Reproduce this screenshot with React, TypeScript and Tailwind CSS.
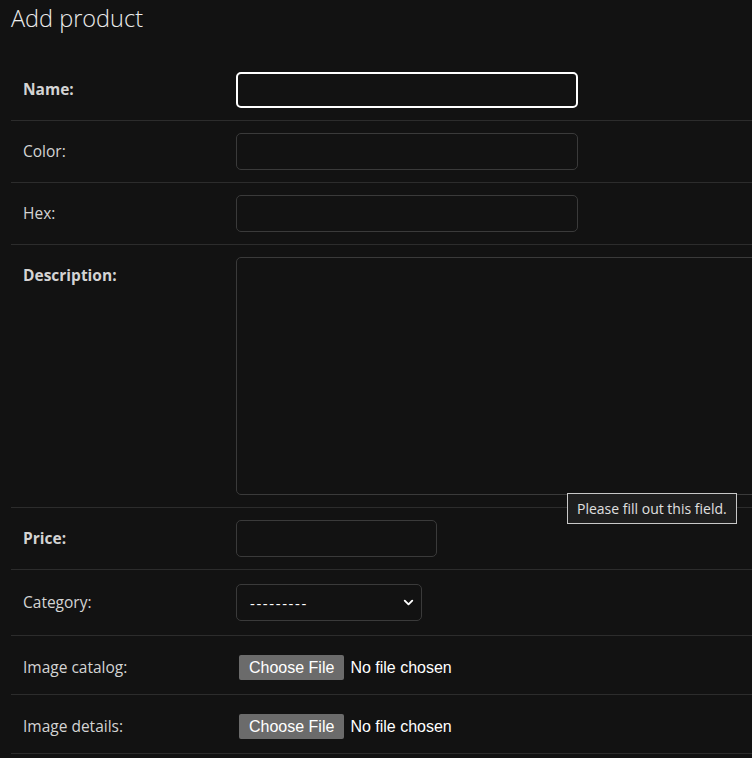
import { ChevronDown } from 'lucide-react';

const font = { fontFamily: '"Open Sans", "Noto Sans", sans-serif' };

function Row({ label, bold, children, pt }: { label: string; bold?: boolean; children: React.ReactNode; pt?: string }) {
  return (
    <div className="flex border-b border-[#2c2c2c] pl-3 py-3">
      <label
        className={`w-[213px] shrink-0 text-[15.5px] text-[#d4d4d4] ${bold ? 'font-bold' : ''} ${pt ?? 'self-center'}`}
      >
        {label}
      </label>
      {children}
    </div>
  );
}

function FileInput() {
  return (
    <div className="flex items-start gap-[6px] h-[34px] pt-[7px] pl-[3px]" style={{ fontFamily: '"Liberation Sans", Arial, sans-serif' }}>
      <span className="h-[25px] px-[10px] bg-[#6b6b6b] text-white text-[16px] leading-[25px] rounded-[2px]">Choose File</span>
      <span className="text-white text-[16px] leading-[25px]">No file chosen</span>
    </div>
  );
}

export default function App() {
  return (
    <div className="relative w-[752px] h-[758px] overflow-hidden bg-[#121212]" style={font}>
      <h1 className="h-[60px] px-[11px] pt-[2px] text-[23.5px] leading-[32px] font-light text-[#ececec]">Add product</h1>
      <div className="ml-[11px]">
        <Row label="Name:" bold>
          <div className="w-[342px] h-[36px] rounded-[5px] border-2 border-white bg-[#121212]" />
        </Row>
        <Row label="Color:">
          <div className="w-[342px] h-[37px] rounded-[5px] border border-[#3a3a3a]" />
        </Row>
        <Row label="Hex:">
          <div className="w-[342px] h-[37px] rounded-[5px] border border-[#3a3a3a]" />
        </Row>
        <Row label="Description:" bold pt="pt-[7px]">
          <div className="w-[620px] h-[238px] shrink-0 rounded-[5px] border border-[#3a3a3a]" />
        </Row>
        <Row label="Price:" bold>
          <div className="w-[201px] h-[37px] rounded-[5px] border border-[#3a3a3a]" />
        </Row>
        <Row label="Category:">
          <div className="my-[2px] w-[186px] h-[37px] rounded-[5px] border border-[#3a3a3a] flex items-center justify-between pl-[13px] pr-[5px]">
            <span className="text-white text-[15px] tracking-[1.6px] pt-[2px]">---------</span>
            <ChevronDown size={15} strokeWidth={3} className="text-white" />
          </div>
        </Row>
        <Row label="Image catalog:" pt="pt-[8px]">
          <FileInput />
        </Row>
        <Row label="Image details:" pt="pt-[8px]">
          <FileInput />
        </Row>
      </div>
      <div className="absolute left-[567px] top-[493px] px-[9px] py-[5px] bg-[#1e1e1e] border border-[#c8c8c8] text-[14px] text-[#e0e0e0] leading-[19px]">
        Please fill out this field.
      </div>
    </div>
  );
}
